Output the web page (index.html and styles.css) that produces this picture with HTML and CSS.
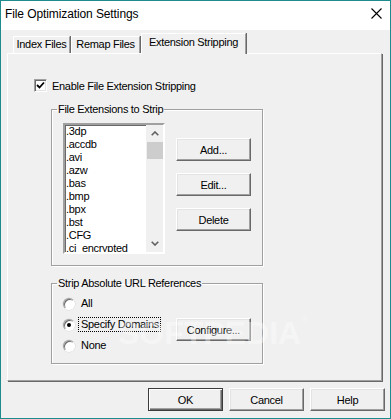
FILE: index.html
```html
<!DOCTYPE html>
<html lang="en">
<head>
  <meta charset="UTF-8">
  <title>File Optimization Settings</title>
  <link rel="stylesheet" href="styles.css">
</head>
<body>
  <div class="window">
    <div class="titlebar">
      <span class="title">File Optimization Settings</span>
      <svg class="close" width="11" height="11" viewBox="0 0 11 11">
        <path d="M0.5 0.5 L10.5 10.5 M10.5 0.5 L0.5 10.5" stroke="#000" stroke-width="1.1" fill="none"/>
      </svg>
    </div>

    <div class="tabs">
      <div class="tab tab-index">Index Files</div>
      <div class="tab tab-remap">Remap Files</div>
      <div class="tab tab-active">Extension Stripping</div>
    </div>

    <div class="panel">
      <label class="check-row">
        <span class="checkbox">
          <svg width="9" height="9" viewBox="0 0 9 9">
            <path d="M1 4 L3.5 6.5 L8 1.5" stroke="#000" stroke-width="1.8" fill="none"/>
          </svg>
        </span>
        <span class="check-label">Enable File Extension Stripping</span>
      </label>

      <fieldset class="group group-ext">
        <legend>File Extensions to Strip</legend>
        <div class="ext-body">
          <div class="listbox">
            <ul class="list-items">
              <li>.3dp</li>
              <li>.accdb</li>
              <li>.avi</li>
              <li>.azw</li>
              <li>.bas</li>
              <li>.bmp</li>
              <li>.bpx</li>
              <li>.bst</li>
              <li>.CFG</li>
              <li>.ci_encrypted</li>
            </ul>
            <div class="scrollbar">
              <div class="sb-btn">
                <svg width="8" height="5" viewBox="0 0 8 5"><path d="M0.7 4.3 L4 1 L7.3 4.3" stroke="#606060" stroke-width="1.6" fill="none"/></svg>
              </div>
              <div class="sb-thumb"></div>
              <div class="sb-track"></div>
              <div class="sb-btn">
                <svg width="8" height="5" viewBox="0 0 8 5"><path d="M0.7 0.7 L4 4 L7.3 0.7" stroke="#606060" stroke-width="1.6" fill="none"/></svg>
              </div>
            </div>
          </div>
          <div class="side-buttons">
            <button type="button" class="btn">Add...</button>
            <button type="button" class="btn">Edit...</button>
            <button type="button" class="btn">Delete</button>
          </div>
        </div>
      </fieldset>

      <fieldset class="group group-url">
        <legend>Strip Absolute URL References</legend>
        <div class="url-body">
          <div class="radio-list">
            <label class="radio-row"><span class="radio"></span><span class="radio-label">All</span></label>
            <label class="radio-row"><span class="radio checked"></span><span class="radio-label focused">Specify Domains</span></label>
            <label class="radio-row"><span class="radio"></span><span class="radio-label">None</span></label>
          </div>
          <div class="configure-col">
            <button type="button" class="btn">Configure...</button>
          </div>
        </div>
      </fieldset>
    </div>

    <div class="dialog-buttons">
      <button type="button" class="btn btn-default">OK</button>
      <button type="button" class="btn">Cancel</button>
      <button type="button" class="btn">Help</button>
    </div>

    <div class="watermark">SOFTPEDIA<sup>®</sup></div>
  </div>
</body>
</html>
```

FILE: styles.css
```css
:root {
  --face: #f0f0f0;
  --shadow: #a0a0a0;
  --dark-shadow: #696969;
  --light: #e3e3e3;
  --frame: #1e8c8c;
}

* {
  box-sizing: border-box;
  margin: 0;
  padding: 0;
}

body {
  font-family: 'Liberation Sans', Arial, sans-serif;
  font-size: 11px;
  letter-spacing: -0.3px;
  color: #000;
  background: #fff;
}

.window {
  position: relative;
  width: 391px;
  height: 419px;
  border: 1px solid var(--frame);
  background: var(--face);
  overflow: hidden;
}

/* タイトルバー */
.titlebar {
  height: 29px;
  background: #fff;
  display: flex;
  align-items: flex-start;
}

.title {
  font-size: 12px;
  letter-spacing: -0.1px;
  line-height: 26px;
  padding-left: 4px;
}

.close {
  margin-left: auto;
  margin-right: 8px;
  margin-top: 7px;
}

/* タブ */
.tabs {
  display: flex;
  align-items: flex-end;
  height: 20px;
  margin-top: 3px;
  margin-left: 12px;
  position: relative;
  z-index: 1;
}

.tab {
  height: 17px;
  line-height: 15px;
  text-align: center;
  background: var(--face);
  border-top: 1px solid #fff;
  border-left: 1px solid #fff;
  border-right: 1px solid var(--shadow);
  box-shadow: 1px 0 0 var(--dark-shadow);
}

.tab-index {
  width: 57px;
}

.tab-remap {
  width: 69px;
  margin-left: 1px;
}

.tab-active {
  width: 105px;
  height: 21px;
  line-height: 17px;
  margin-left: 1px;
  margin-bottom: -1px;
}

/* パネル */
.panel {
  width: 375px;
  height: 328px;
  margin-left: 6px;
  padding-left: 26px;
  border: 1px solid;
  border-color: #fff var(--shadow) var(--shadow) #fff;
  box-shadow: 1px 1px 0 var(--dark-shadow);
}

.check-row {
  display: flex;
  align-items: center;
  height: 13px;
  margin-top: 25px;
}

.checkbox {
  width: 13px;
  height: 13px;
  background: #fff;
  border: 1px solid;
  border-color: var(--shadow) #fff #fff var(--shadow);
  box-shadow: inset 1px 1px 0 var(--dark-shadow), inset -1px -1px 0 var(--light);
  display: flex;
  align-items: center;
  justify-content: center;
}

.check-label {
  margin-left: 5px;
}

.group {
  width: 212px;
  margin-left: 17px;
  border: 1px solid var(--shadow);
  box-shadow: inset 1px 1px 0 #fff, 1px 1px 0 #fff;
  min-width: 0;
}

.group legend {
  margin-left: 5px;
  padding: 0 1px;
  line-height: 13px;
}

.group-ext {
  margin-top: 11px;
}

.ext-body {
  display: flex;
  align-items: flex-start;
  padding: 7px 11px 11px 11px;
}

/* リストボックス */
.listbox {
  width: 104px;
  height: 131px;
  display: flex;
  background: #fff;
  border: 2px solid;
  border-color: var(--shadow) #fff #fff var(--shadow);
  box-shadow: inset 1px 1px 0 var(--dark-shadow);
}

.list-items {
  list-style: none;
  flex: 1;
  overflow: hidden;
  padding-left: 1px;
}

.list-items li {
  height: 13px;
  line-height: 13px;
  white-space: nowrap;
}

.scrollbar {
  width: 17px;
  background: var(--face);
  display: flex;
  flex-direction: column;
}

.sb-btn {
  height: 17px;
  display: flex;
  align-items: center;
  justify-content: center;
}

.sb-thumb {
  height: 17px;
  margin-left: 1px;
  background: #cdcdcd;
}

.sb-track {
  flex: 1;
}

.side-buttons {
  display: flex;
  flex-direction: column;
  gap: 12px;
  margin-left: 11px;
  margin-top: 15px;
}

/* ボタン */
.btn {
  width: 75px;
  height: 23px;
  font-family: inherit;
  font-size: 11px;
  letter-spacing: -0.3px;
  color: #000;
  background: var(--face);
  border: 1px solid;
  border-color: #fff var(--dark-shadow) var(--dark-shadow) #fff;
  box-shadow: inset -1px -1px 0 var(--shadow), inset 1px 1px 0 var(--light);
}

.btn-default {
  border-color: #3c3c3c;
  box-shadow: inset 1px 1px 0 #fff, inset -1px -1px 0 var(--dark-shadow), inset -2px -2px 0 var(--shadow);
}

/* ラジオボタン */
.group-url {
  margin-top: 11px;
}

.url-body {
  display: flex;
  padding: 3px 11px 7px 11px;
}

.radio-list {
  width: 115px;
  display: flex;
  flex-direction: column;
}

.radio-row {
  height: 21px;
  display: flex;
  align-items: center;
}

.radio {
  width: 12px;
  height: 12px;
  border-radius: 50%;
  background: #fff;
  border: 1px solid;
  border-color: var(--shadow) #fff #fff var(--shadow);
  box-shadow: inset 1px 1px 0 var(--dark-shadow), 0 0 0 0.5px #d8d8d8;
  display: flex;
  align-items: center;
  justify-content: center;
}

.radio.checked::after {
  content: "";
  width: 4px;
  height: 4px;
  border-radius: 50%;
  background: #000;
}

.radio-label {
  margin-left: 4px;
  padding: 0 1px 0 2px;
  line-height: 13px;
}

.radio-label.focused {
  outline: 1px dotted #000;
  outline-offset: 0;
}

.configure-col {
  margin-top: 25px;
}

/* 下部ボタン */
.dialog-buttons {
  display: flex;
  justify-content: flex-end;
  gap: 6px;
  margin-top: 7px;
  padding-right: 5px;
}

/* 透かし */
.watermark {
  position: absolute;
  left: 117px;
  top: 314px;
  font-size: 32px;
  font-weight: bold;
  letter-spacing: 0;
  color: rgba(255, 255, 255, 0.4);
  pointer-events: none;
}

.watermark sup {
  font-size: 9px;
  font-weight: normal;
  vertical-align: top;
}
```
